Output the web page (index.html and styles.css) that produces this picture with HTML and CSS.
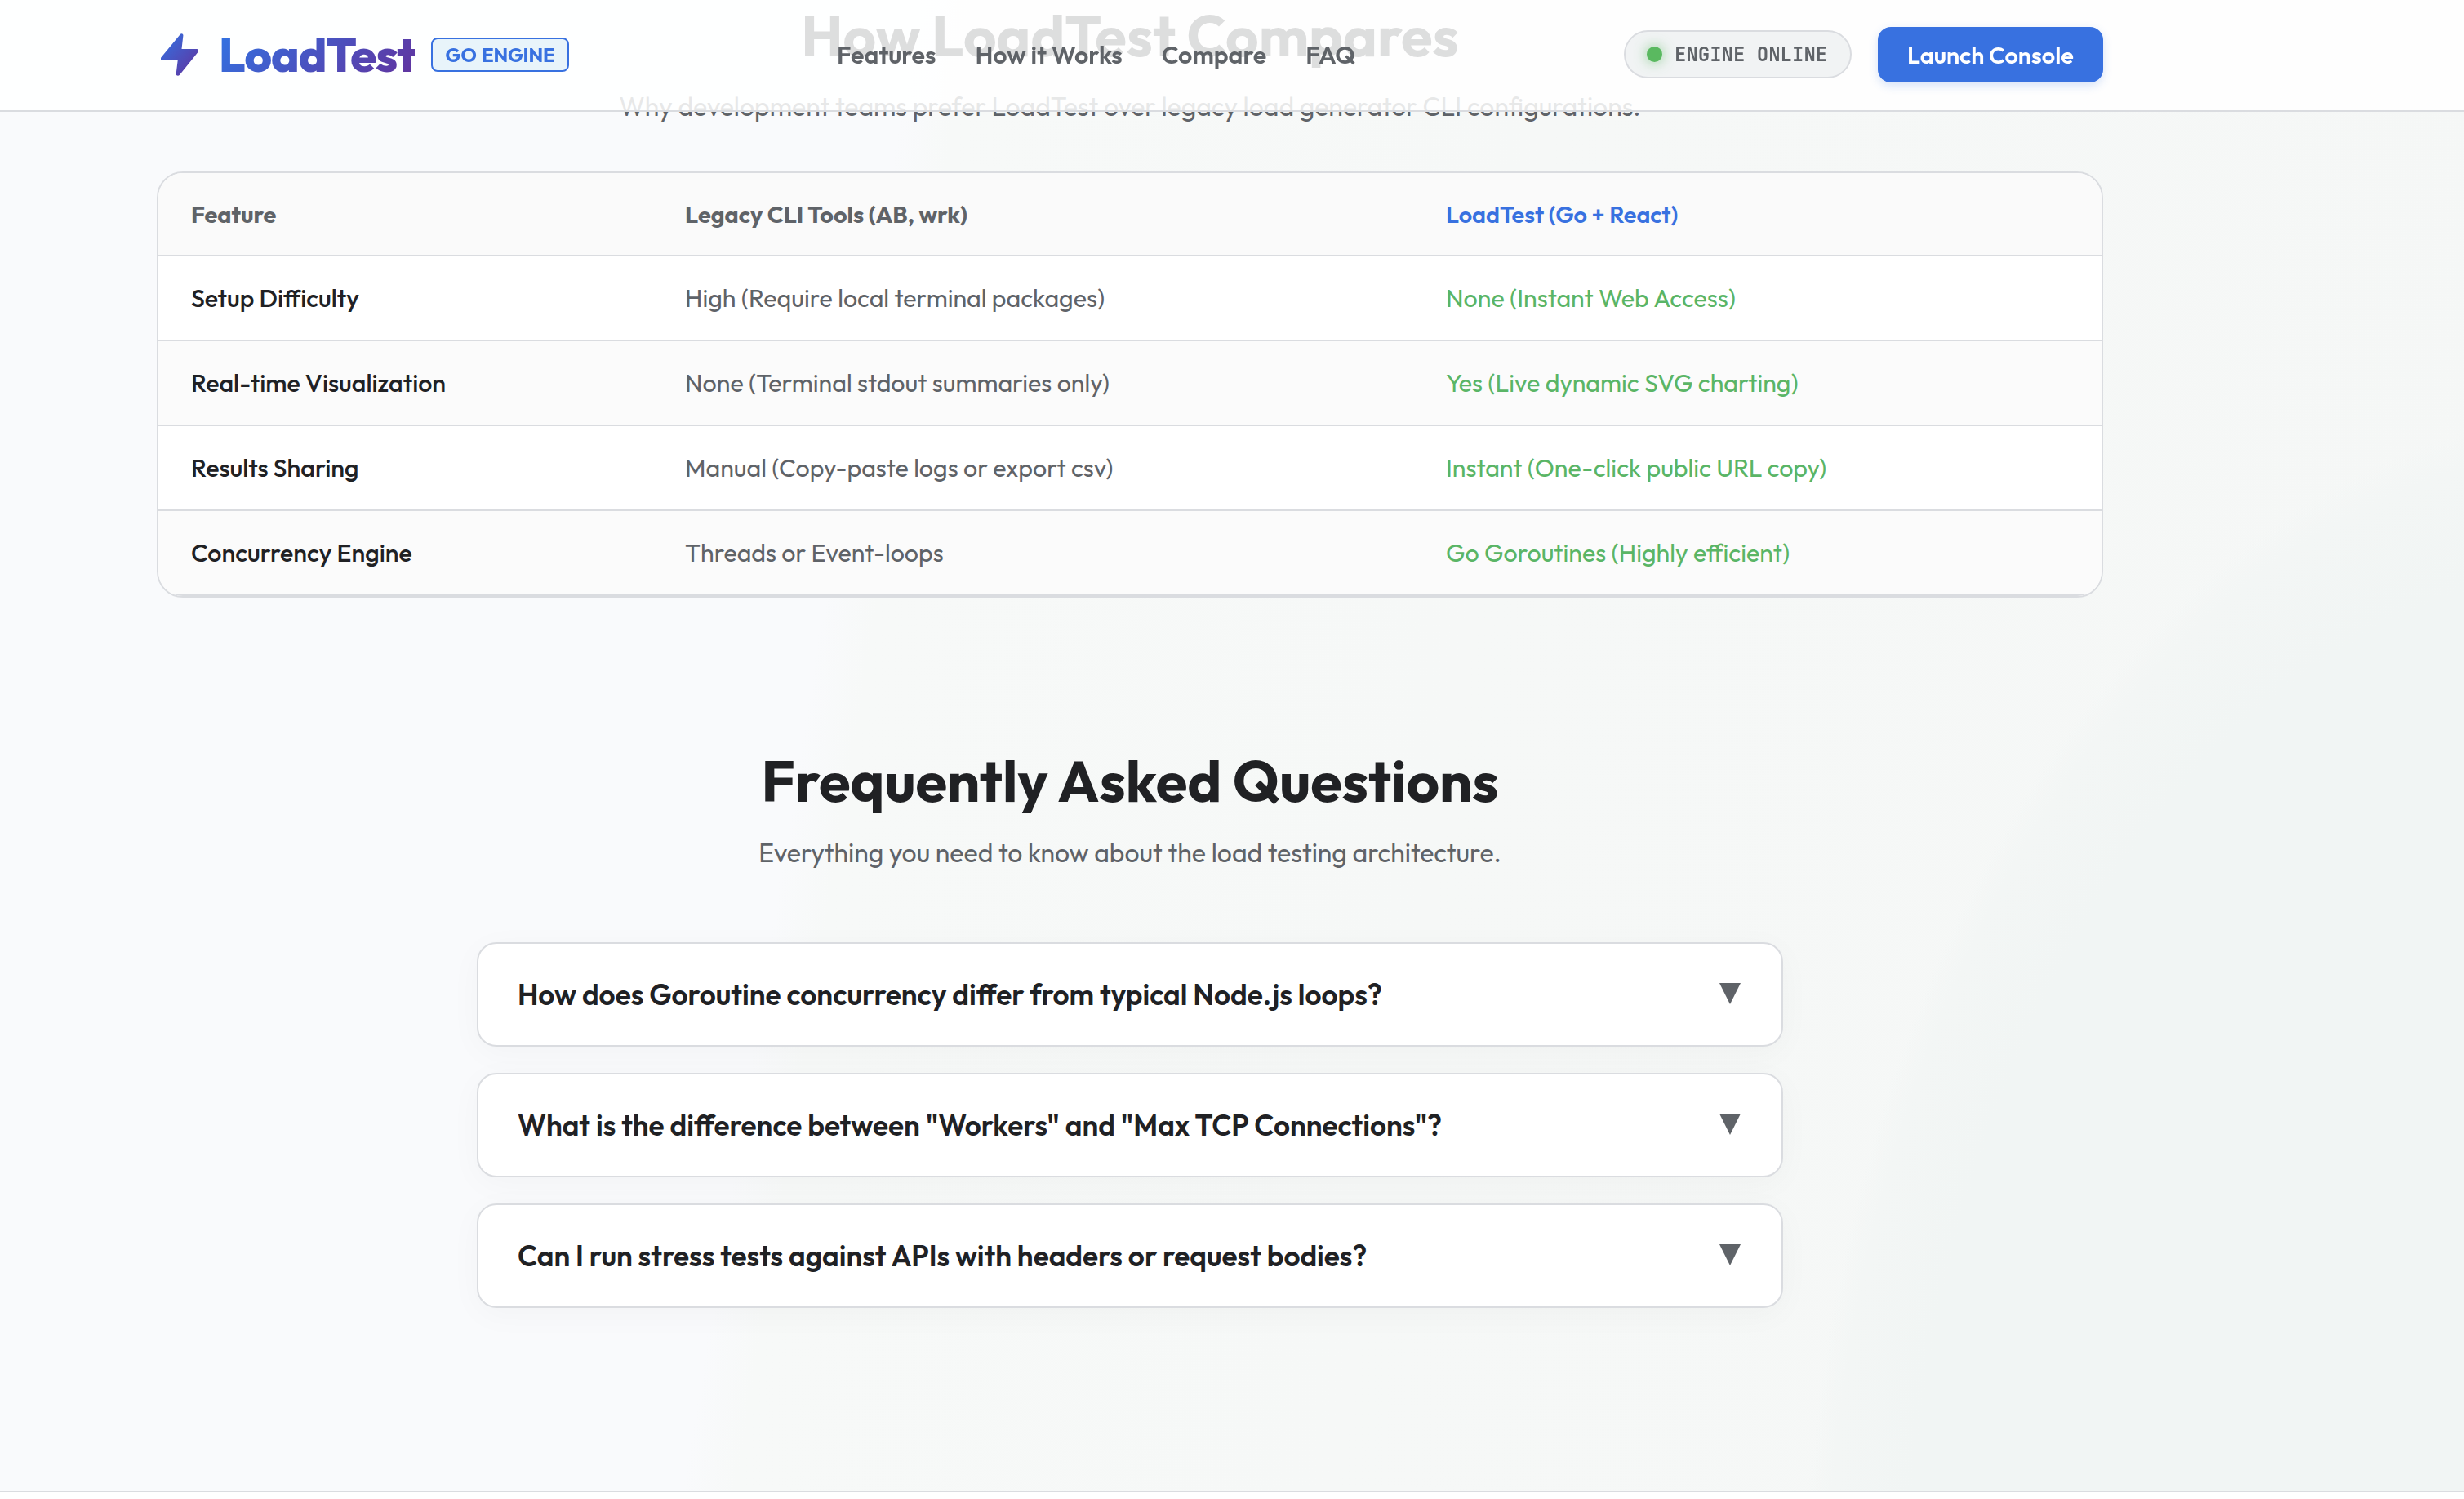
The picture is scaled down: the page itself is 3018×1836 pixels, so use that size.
FILE: index.html
```html
<!DOCTYPE html>
<html lang="en">
  <head>
    <meta charset="UTF-8" />
    <meta name="viewport" content="width=device-width, initial-scale=1.0" />
    <title>LoadTest</title>
    <link rel="stylesheet" href="styles.css">
  </head>
  <body>
    <header class="navbar">
      <div class="nav-inner">
        <a class="logo" href="#">
          <svg class="logo-icon" viewBox="0 0 46 52" aria-hidden="true">
            <defs>
              <linearGradient id="boltGradient" x1="0" y1="0" x2="1" y2="1">
                <stop offset="0" stop-color="#3174e4" />
                <stop offset="1" stop-color="#63319c" />
              </linearGradient>
            </defs>
            <path fill="url(#boltGradient)" d="M23.6 1.2C25 -.6 27.600 .2 27.400 2.600L25.500 19H43.500C46 19 46.800 21.200 45.400 23L23 50.800C21.400 52.600 18.400 51.800 18.700 49.200L20.700 33H2.200C-.2 33-.8 30.800 .6 29Z" />
          </svg>
          <span class="logo-text">LoadTest</span>
          <span class="logo-badge">GO ENGINE</span>
        </a>
        <nav class="nav-links">
          <a href="#features">Features</a>
          <a href="#how">How it Works</a>
          <a href="#compare">Compare</a>
          <a href="#faq">FAQ</a>
        </nav>
        <div class="nav-actions">
          <div class="status-pill"><span class="status-dot"></span>ENGINE ONLINE</div>
          <button class="launch-btn">Launch Console</button>
        </div>
      </div>
    </header>

    <main class="page">
      <!-- Comparison table -->
      <section class="compare" id="compare">
        <h2 class="section-title">How LoadTest Compares</h2>
        <p class="section-sub compare-sub">Why development teams prefer LoadTest over legacy load generator CLI configurations.</p>
        <div class="table-card">
          <table class="compare-table">
            <thead>
              <tr>
                <th class="col-feature">Feature</th>
                <th class="col-legacy">Legacy CLI Tools (AB, wrk)</th>
                <th class="highlight">LoadTest (Go + React)</th>
              </tr>
            </thead>
            <tbody>
              <tr>
                <td>Setup Difficulty</td>
                <td>High (Require local terminal packages)</td>
                <td>None (Instant Web Access)</td>
              </tr>
              <tr>
                <td>Real-time Visualization</td>
                <td>None (Terminal stdout summaries only)</td>
                <td>Yes (Live dynamic SVG charting)</td>
              </tr>
              <tr>
                <td>Results Sharing</td>
                <td>Manual (Copy-paste logs or export csv)</td>
                <td>Instant (One-click public URL copy)</td>
              </tr>
              <tr>
                <td>Concurrency Engine</td>
                <td>Threads or Event-loops</td>
                <td>Go Goroutines (Highly efficient)</td>
              </tr>
            </tbody>
          </table>
        </div>
      </section>

      <!-- FAQ -->
      <section class="faq" id="faq">
        <h2 class="section-title">Frequently Asked Questions</h2>
        <p class="section-sub faq-sub">Everything you need to know about the load testing architecture.</p>
        <div class="faq-list">
          <div class="faq-item">
            <span class="faq-question">How does Goroutine concurrency differ from typical Node.js loops?</span>
            <svg class="faq-arrow" viewBox="0 0 26 26"><path d="M0 0H26L13 26Z" /></svg>
          </div>
          <div class="faq-item">
            <span class="faq-question">What is the difference between "Workers" and "Max TCP Connections"?</span>
            <svg class="faq-arrow" viewBox="0 0 26 26"><path d="M0 0H26L13 26Z" /></svg>
          </div>
          <div class="faq-item">
            <span class="faq-question">Can I run stress tests against APIs with headers or request bodies?</span>
            <svg class="faq-arrow" viewBox="0 0 26 26"><path d="M0 0H26L13 26Z" /></svg>
          </div>
        </div>
      </section>
    </main>

    <footer class="footer"></footer>
  </body>
</html>
```
FILE: styles.css
```css
* {
  box-sizing: border-box;
  margin: 0;
  padding: 0;
}
body {
  height: 1836px;
  overflow: hidden;
  display: flex;
  flex-direction: column;
  font-family: "Outfit", "Lato", sans-serif;
  color: #202124;
  background:
    radial-gradient(982px 1481px at 3200px 2000px, #f1f5f4 0%, #f1f5f4 88%, #f3f6f5 98%, rgba(243, 246, 245, 0) 101%),
    linear-gradient(99deg, #f9fafc 0%, #f9fafc 34%, #f7f9f8 36%, #f6f8f7 58%, #f5f7f6 100%);
}
a {
  color: inherit;
  text-decoration: none;
}

/* Navbar */
.navbar {
  position: fixed;
  top: 0;
  left: 0;
  z-index: 10;
  width: 100%;
  height: 137px;
  padding: 0 442px 0 192px;
  background: rgba(255, 255, 255, 0.85);
  border-bottom: 2px solid #dadce0;
}
.nav-inner {
  height: 134px;
  display: flex;
  align-items: center;
  justify-content: space-between;
}
.logo {
  display: flex;
  align-items: center;
  width: 833px;
  padding-left: 5px;
}
.logo-icon {
  width: 46px;
  height: 52px;
  margin-right: 25px;
}
.logo-text {
  width: 240px;
  margin-right: 20px;
  font-size: 57.6px;
  font-weight: 800;
  line-height: 70px;
  letter-spacing: -1px;
  color: transparent;
  background: linear-gradient(135deg, #3174e4, #63319c);
  background-clip: text;
  -webkit-background-clip: text;
}
.logo-badge {
  width: 169px;
  height: 42px;
  border: 2px solid #3871e0;
  border-radius: 8px;
  background: #e8f4fa;
  color: #3871e0;
  font-size: 24px;
  font-weight: 700;
  line-height: 38px;
  letter-spacing: -0.2px;
  word-spacing: 2px;
  text-align: center;
}
.nav-links {
  flex: 1;
  display: flex;
  gap: 48px;
  font-size: 30.4px;
  font-weight: 600;
  color: #5f6368;
}
.nav-actions {
  display: flex;
  align-items: center;
  gap: 32px;
}
.status-pill {
  width: 279px;
  height: 59px;
  display: flex;
  align-items: center;
  gap: 15px;
  padding-left: 26px;
  margin-bottom: 1px;
  border: 2px solid #dadce0;
  border-radius: 30px;
  background: #f1f3f4;
  color: #5f6368;
  font-family: "JetBrains Mono", "DejaVu Sans Mono", monospace;
  font-size: 24px;
  font-weight: 600;
  white-space: nowrap;
}
.status-dot {
  width: 19px;
  height: 19px;
  border-radius: 50%;
  background: #5ab960;
  box-shadow: 0 0 16px rgba(90, 185, 96, 0.7);
}
.launch-btn {
  width: 276px;
  height: 68px;
  border: none;
  border-radius: 16px;
  background: #3871e0;
  box-shadow: 0 4px 12px rgba(56, 113, 224, 0.2);
  color: #fff;
  font-family: inherit;
  font-size: 28.8px;
  font-weight: 600;
  cursor: pointer;
}

/* Sections */
.page {
  width: 2768px;
  height: 1826px;
  padding: 0 192px;
}
.section-title {
  font-size: 70.4px;
  font-weight: 700;
  line-height: 86px;
  text-align: center;
  white-space: nowrap;
}
.section-sub {
  font-size: 32px;
  line-height: 40px;
  color: #5f6368;
  text-align: center;
  white-space: nowrap;
}
.compare-sub {
  padding-top: 24px;
}

/* Comparison table */
.table-card {
  margin-top: 60px;
  height: 522px;
  border: 2px solid #dadce0;
  border-radius: 32px;
  background: #fff;
  overflow: hidden;
}
.compare-table {
  width: 100%;
  table-layout: fixed;
  border-collapse: separate;
  border-spacing: 0;
}
.compare-table th,
.compare-table td {
  height: 104px;
  padding: 0 40px;
  border-bottom: 2px solid #dadce0;
  text-align: left;
  font-size: 30.4px;
  color: #5f6368;
  white-space: nowrap;
}
.compare-table th {
  height: 102px;
  background: #fafafa;
  font-size: 28.8px;
  font-weight: 700;
}
.col-feature {
  width: 605px;
}
.col-legacy {
  width: 932px;
}
.compare-table th.highlight {
  color: #3871e0;
  font-weight: 600;
}
.compare-table tr:nth-child(even) td {
  background: #fbfbfb;
}
.compare-table td:first-child {
  color: #202124;
  font-weight: 500;
}
.compare-table td:last-child {
  color: #5ab566;
}

/* FAQ */
.faq {
  padding-top: 181px;
}
.faq-sub {
  padding-top: 25px;
}
.faq-list {
  width: 1600px;
  margin: 90px auto 0;
  display: flex;
  flex-direction: column;
  gap: 32px;
}
.faq-item {
  height: 128px;
  padding: 0 50px 0 48px;
  display: flex;
  align-items: center;
  justify-content: space-between;
  border: 2px solid #dadce0;
  border-radius: 24px;
  background: #fff;
  box-shadow: 0 8px 40px rgba(0, 0, 0, 0.03);
  font-size: 35.2px;
  font-weight: 600;
}
.faq-arrow {
  width: 26px;
  height: 26px;
  margin-bottom: 2px;
  fill: #5f6368;
}

.footer {
  flex: 1;
  border-top: 2px solid #dadce0;
  background: #fff;
}
```
